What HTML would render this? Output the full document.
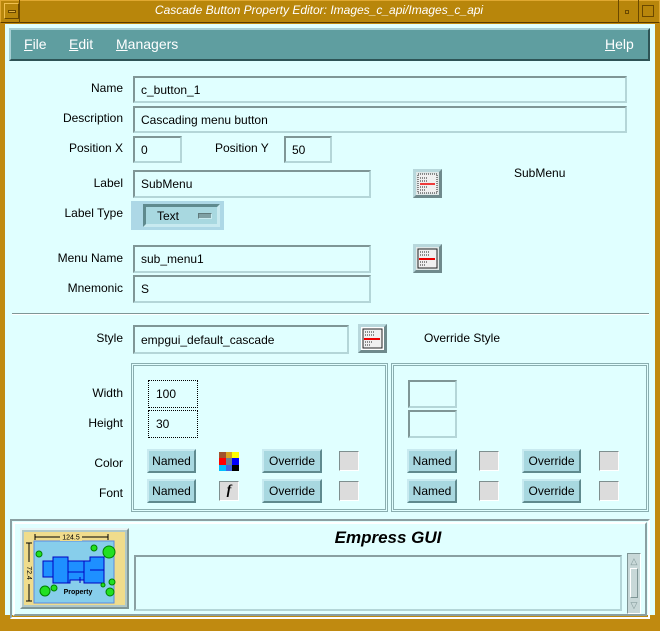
<!DOCTYPE html>
<html><head><meta charset="utf-8"><style>
*{margin:0;padding:0;box-sizing:border-box}
body{width:660px;height:631px;overflow:hidden;background:#c08a10;font-family:"Liberation Sans",sans-serif;font-size:12px;color:#000;position:relative}
.a{position:absolute}
.lbl{position:absolute;text-align:right;width:120px;font-size:12px}
.in{position:absolute;background:#e0ffff;border:2px solid;border-color:#7f9696 #b4d6d8 #b4d6d8 #7f9696;padding-left:6px;font-size:12px;display:flex;align-items:center}
.btn{position:absolute;background:#a8d8e0;border:2px solid;border-color:#c8eaf0 #5f8a8e #5f8a8e #c8eaf0;display:flex;align-items:center;justify-content:center;font-size:12px}
.chk{position:absolute;background:#dcdcdc;border:1px solid;border-color:#7f8f8f #fff #fff #7f8f8f;width:20px;height:20px}
.ib{position:absolute;width:29px;height:29px;background:#e0e8e8;border:3px solid;border-color:#b8d8dc #6f8a8c #6f8a8c #b8d8dc}
.box{position:absolute;border:3px double #8aaeb0}
</style></head><body>
<div class="a" style="left:0;top:0;width:660px;height:23px;background:#b8860b;border:1px solid #e0a830;border-bottom-color:#5a3c00"></div>
<div class="a" style="left:4px;top:3px;width:15px;height:16px;border:1px solid;border-color:#f0c050 #6a4800 #6a4800 #f0c050"></div>
<div class="a" style="left:8px;top:10px;width:8px;height:3px;border:1px solid #6a4800;background:#e0b040"></div>
<div class="a" style="left:19px;top:0;width:1px;height:23px;background:#6a4800"></div>
<div class="a" style="left:618px;top:0;width:1px;height:23px;background:#6a4800"></div>
<div class="a" style="left:638px;top:0;width:1px;height:23px;background:#6a4800"></div>
<div class="a" style="left:625px;top:10px;width:4px;height:4px;border:1px solid #6a4800"></div>
<div class="a" style="left:642px;top:5px;width:12px;height:12px;border:1px solid #6a4800"></div>
<div class="a" style="left:20px;top:3px;width:598px;text-align:center;color:#fff;font-style:italic;font-size:12px">Cascade Button Property Editor: Images_c_api/Images_c_api</div>
<div class="a" style="left:5px;top:24px;width:650px;height:591px;background:#e0ffff"></div>
<div class="a" style="left:9px;top:28px;width:641px;height:33px;background:#5f9ea0;border:2px solid;border-color:#a8d0d4 #2e5456 #2e5456 #a8d0d4"></div>
<div class="a" style="left:24px;top:36px;color:#fff;font-size:14px"><u>F</u>ile</div>
<div class="a" style="left:69px;top:36px;color:#fff;font-size:14px"><u>E</u>dit</div>
<div class="a" style="left:116px;top:36px;color:#fff;font-size:14px"><u>M</u>anagers</div>
<div class="a" style="left:605px;top:36px;color:#fff;font-size:14px"><u>H</u>elp</div>
<div class="lbl" style="left:3px;top:81px">Name</div>
<div class="in" style="left:133px;top:76px;width:494px;height:27px">c_button_1</div>
<div class="lbl" style="left:3px;top:111px">Description</div>
<div class="in" style="left:133px;top:106px;width:494px;height:27px">Cascading menu button</div>
<div class="lbl" style="left:3px;top:141px">Position X</div>
<div class="in" style="left:133px;top:136px;width:49px;height:27px">0</div>
<div class="a" style="left:215px;top:141px">Position Y</div>
<div class="in" style="left:284px;top:136px;width:48px;height:27px">50</div>
<div class="lbl" style="left:3px;top:176px">Label</div>
<div class="in" style="left:133px;top:170px;width:238px;height:28px">SubMenu</div>
<div class="ib" style="left:413px;top:169px"><svg width="23" height="23" style="position:absolute;left:0;top:0"><rect x="2" y="2" width="19" height="19" fill="#f0f0f0" stroke="#222" stroke-dasharray="1,1"/><path d="M4 6h8M4 9h8M4 15h8M4 18h6" stroke="#222" stroke-dasharray="1,1"/><path d="M4 12h15" stroke="#e00" stroke-width="1.5"/></svg></div>
<div class="a" style="left:514px;top:166px">SubMenu</div>
<div class="lbl" style="left:3px;top:206px">Label Type</div>
<div class="a" style="left:131px;top:201px;width:93px;height:29px;background:#add8e6"></div>
<div class="btn" style="left:143px;top:204px;width:77px;height:23px;border-color:#5f8a8e #c8eaf0 #c8eaf0 #5f8a8e;border-width:3px;justify-content:flex-start;padding-left:11px">Text<span style="position:absolute;left:52px;top:6px;width:14px;height:6px;background:#7fa0a4;border:1px solid;border-color:#5f7a7c #c8eaf0 #c8eaf0 #5f7a7c"></span></div>
<div class="lbl" style="left:3px;top:251px">Menu Name</div>
<div class="in" style="left:133px;top:245px;width:238px;height:28px">sub_menu1</div>
<div class="ib" style="left:413px;top:244px"><svg width="23" height="23" style="position:absolute;left:0;top:0"><rect x="2" y="2" width="19" height="19" fill="#f0f0f0" stroke="#222"/><path d="M4 5h10M4 8h10M4 15h8M4 18h6" stroke="#222" stroke-dasharray="1,1"/><path d="M3 12h16" stroke="#e00" stroke-width="2"/></svg></div>
<div class="lbl" style="left:3px;top:281px">Mnemonic</div>
<div class="in" style="left:133px;top:275px;width:238px;height:28px">S</div>
<div class="a" style="left:12px;top:313px;width:637px;height:2px;border-top:1px solid #7f9696;border-bottom:1px solid #fff"></div>
<div class="lbl" style="left:3px;top:331px">Style</div>
<div class="in" style="left:133px;top:325px;width:216px;height:29px">empgui_default_cascade</div>
<div class="ib" style="left:358px;top:324px;background:#fff"><svg width="23" height="23" style="position:absolute;left:0;top:0"><rect x="2" y="2" width="19" height="19" fill="#f0f0f0" stroke="#222"/><path d="M4 5h10M4 8h10M4 15h8M4 18h6" stroke="#222" stroke-dasharray="1,1"/><path d="M3 12h16" stroke="#e00" stroke-width="2"/></svg></div>
<div class="a" style="left:424px;top:331px">Override Style</div>
<div class="box" style="left:131px;top:363px;width:257px;height:149px"></div>
<div class="box" style="left:391px;top:363px;width:258px;height:149px"></div>
<div class="lbl" style="left:3px;top:386px">Width</div>
<div class="in" style="left:148px;top:380px;width:50px;height:28px;border:1px dotted #000;padding-left:7px">100</div>
<div class="lbl" style="left:3px;top:416px">Height</div>
<div class="in" style="left:148px;top:410px;width:50px;height:28px;border:1px dotted #000;padding-left:7px">30</div>
<div class="lbl" style="left:3px;top:456px">Color</div>
<div class="lbl" style="left:3px;top:486px">Font</div>
<div class="btn" style="left:147px;top:449px;width:49px;height:24px">Named</div>
<div class="btn" style="left:147px;top:479px;width:49px;height:24px">Named</div>
<div class="a" style="left:219px;top:452px;width:20px;height:19px;display:grid;grid-template-columns:repeat(3,1fr)"><i style="background:#a0522d"></i><i style="background:#daa520"></i><i style="background:#ff0"></i><i style="background:#f00"></i><i style="background:#708090"></i><i style="background:#00f"></i><i style="background:#00bfff"></i><i style="background:#4169e1"></i><i style="background:#000"></i></div>
<div class="a" style="left:219px;top:481px;width:20px;height:20px;background:#dcdcdc;border:1px solid;border-color:#7f8f8f #fff #fff #7f8f8f;font-family:'Liberation Serif',serif;font-style:italic;font-weight:bold;font-size:14px;text-align:center;line-height:18px">f</div>
<div class="btn" style="left:262px;top:449px;width:60px;height:24px">Override</div>
<div class="btn" style="left:262px;top:479px;width:60px;height:24px">Override</div>
<div class="chk" style="left:339px;top:451px"></div>
<div class="chk" style="left:339px;top:481px"></div>
<div class="in" style="left:408px;top:380px;width:49px;height:28px"></div>
<div class="in" style="left:408px;top:410px;width:49px;height:28px"></div>
<div class="btn" style="left:407px;top:449px;width:50px;height:24px">Named</div>
<div class="btn" style="left:407px;top:479px;width:50px;height:24px">Named</div>
<div class="chk" style="left:479px;top:451px"></div>
<div class="chk" style="left:479px;top:481px"></div>
<div class="btn" style="left:522px;top:449px;width:59px;height:24px">Override</div>
<div class="btn" style="left:522px;top:479px;width:59px;height:24px">Override</div>
<div class="chk" style="left:599px;top:451px"></div>
<div class="chk" style="left:599px;top:481px"></div>
<div class="a" style="left:10px;top:519px;width:640px;height:100px;border:2px solid;border-color:#8aa0a2 #fff #fff #8aa0a2"></div>
<div class="a" style="left:13px;top:522px;width:634px;height:94px;border:2px solid;border-color:#fff #8aa0a2 #8aa0a2 #fff"></div>
<div class="a" style="left:20px;top:528px;width:109px;height:81px;background:#b0c8c8;border:2px solid;border-color:#e8f4f4 #7f9696 #7f9696 #e8f4f4"></div>
<svg class="a" style="left:24px;top:532px" width="101" height="73" viewBox="0 0 101 73">
<rect x="0" y="0" width="101" height="73" fill="#f0dc8c"/>
<rect x="10" y="9" width="80" height="62" fill="#87ceeb" stroke="#5a8ae0"/>
<path d="M11 5h73M11 2v6M84 2v6M5 11v58M2 11h6M2 69h6" stroke="#000" stroke-width="1"/>
<rect x="36" y="1" width="22" height="8" fill="#f0dc8c"/>
<text x="47" y="7.5" font-size="7" text-anchor="middle" font-family="Liberation Sans">124.5</text>
<rect x="1" y="30" width="8" height="22" fill="#f0dc8c"/>
<text x="5" y="41" font-size="7" text-anchor="middle" font-family="Liberation Sans" transform="rotate(90 5 41)" dy="2">72.4</text>
<path d="M19 29h10v-4h15v4h22v-4h14v26h-20v-3h-14v3h-17v-6h-10z" fill="#1e90ff" stroke="#0000c0"/>
<path d="M29 29v17M44 29v22M60 29v22M44 40h16M66 38h14M56 45v6" stroke="#0000c0"/>
<text x="54" y="62" font-size="7" text-anchor="middle" font-family="Liberation Sans" font-weight="bold">Property</text>
<g fill="#22e022" stroke="#008000"><circle cx="85" cy="20" r="6"/><circle cx="70" cy="16" r="3"/><circle cx="15" cy="22" r="3"/><circle cx="21" cy="59" r="5"/><circle cx="30" cy="56" r="3"/><circle cx="86" cy="60" r="4"/><circle cx="88" cy="50" r="3"/><circle cx="79" cy="53" r="2"/></g>
</svg>
<div class="a" style="left:134px;top:528px;width:508px;text-align:center;font-size:17px;font-weight:bold;font-style:italic">Empress GUI</div>
<div class="a" style="left:134px;top:555px;width:488px;height:56px;border:2px solid;border-color:#8aa0a2 #b4d6d8 #b4d6d8 #8aa0a2;background:#e0ffff"></div>
<div class="a" style="left:627px;top:553px;width:14px;height:61px;background:#c8d8d8;border:1px solid;border-color:#7f9696 #fff #fff #7f9696"></div>
<div class="a" style="left:629px;top:556px;width:10px;height:10px;font-size:9px;line-height:10px;color:#7f9696;text-align:center">△</div>
<div class="a" style="left:630px;top:568px;width:8px;height:30px;border:1px solid;border-color:#fff #7f9696 #7f9696 #fff"></div>
<div class="a" style="left:629px;top:600px;width:10px;height:10px;font-size:9px;line-height:10px;color:#7f9696;text-align:center">▽</div>
</body></html>
